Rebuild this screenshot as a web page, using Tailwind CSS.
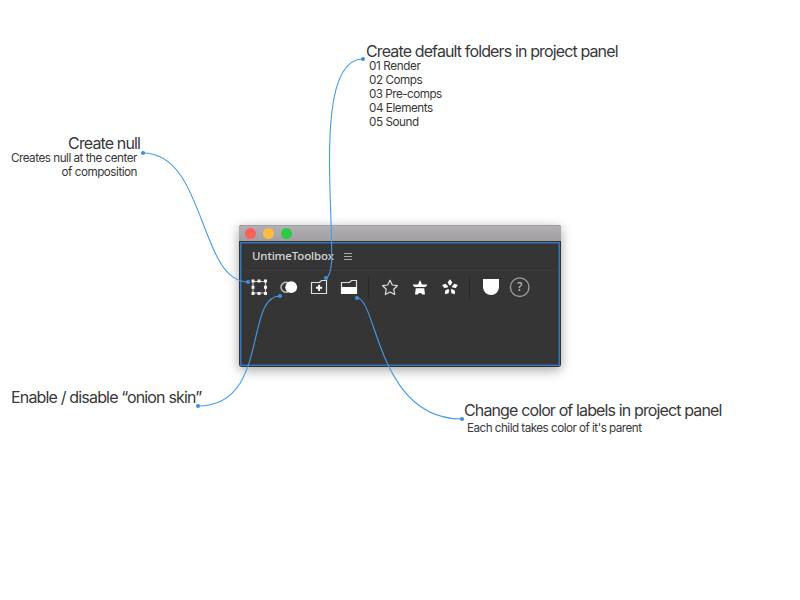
<!DOCTYPE html>
<html lang="en">
<head>
<meta charset="utf-8">
<title>UntimeToolbox</title>
<script src="https://cdn.jsdelivr.net/npm/@tailwindcss/browser@4"></script>
</head>
<body class="bg-white">
<main class="relative h-[600px] w-[800px] overflow-hidden bg-white font-[Inter,sans-serif] text-[#383838]">

  <!-- Panel window -->
  <section class="absolute left-[239px] top-[225px] flex h-[142px] w-[322px] flex-col overflow-hidden rounded-[3px] bg-[#303236] shadow-[0_3px_12px_rgba(0,0,0,0.36)]">
    <header class="flex h-4 shrink-0 items-center gap-[7px] border-t border-[#a09ea0] bg-linear-to-b from-[#b3b0b3] to-[#a29fa2] pl-[6px]">
      <i class="size-[11px] rounded-full bg-[#fc605b]"></i>
      <i class="size-[11px] rounded-full bg-[#fdbc40]"></i>
      <i class="size-[11px] rounded-full bg-[#2bcb43]"></i>
    </header>
    <div class="mx-px mb-px mt-[1px] flex grow flex-col border border-[#3777b5] bg-[#353535] shadow-[inset_0_0_0_1px_#36536f]">
      <div class="flex h-7 items-center gap-[10px] border-b border-[#3d3d3d] pl-[11px]">
        <span class="w-[82px] whitespace-nowrap pb-[2px] font-['Noto_Sans',sans-serif] text-[11.500px] font-medium tracking-[-0.150px] text-[#d5d5d5]">UntimeToolbox</span>
        <svg class="h-[9px] w-[9px]" viewBox="0 0 9 9" stroke="#aaa"><path d="M0 1.5h8M0 4.5h8M0 7.5h8"/></svg>
      </div>
      <div class="h-[34px]">
        <svg class="h-[34px] w-[319px]" viewBox="241 271 319 34" fill="none" stroke="#dedede" stroke-width="1.2">
          <path d="M253 281.500h12.500v11.500H253z" stroke="#c6c6c6"/>
          <g fill="#f4f4f4" stroke="none"><path d="M251.500 279.500h3v3h-3zM257.500 279.500h3v3h-3zM264 279.500h3v3h-3zM251.500 285.700h3v3h-3zM264 285.700h3v3h-3zM251.500 292h3v3h-3zM257.500 292h3v3h-3zM264 292h3v3h-3z"/></g>
          <circle cx="286" cy="287.200" r="5" stroke="#c8c8c8" stroke-width="1.400"/>
          <circle cx="291.200" cy="287.200" r="5.900" fill="#fff" stroke="none"/>
          <path d="M311.500 282.500h8l2-2h5v13h-15zM341.500 282.500h8l2-2h5v13h-15z"/>
          <path d="M316 287.800h6.200M319.100 284.700v6.200" stroke="#fff" stroke-width="1.900"/>
          <path d="M341 287h16v7h-16z" fill="#fff" stroke="none"/>
          <path d="M368.500 277v22M469.500 277v22" stroke="#292929" stroke-width="1"/>
          <path d="M390 280.300l2.300 4.700 5.100.7-3.700 3.600 1 5.200-4.700-2.500-4.700 2.500 1-5.200-3.700-3.600 5.100-.7z" stroke-linejoin="round"/>
          <g fill="#fff" stroke="none">
            <path d="M420 280l2 4.600h5v.8l-1.700 1.600h-10.600l-1.700-1.600v-.8h5zM415.800 288.300h8.400l.8 6.200h-2.600q-2.300-2.800-4.800 0h-2.600z"/>
            <path d="M450 279.300l2.300 2.900-1.500 3.100h-1.600l-1.500-3.100z"/>
            <path d="M450 279.300l2.200 2.900-1.500 3.100h-1.400l-1.500-3.100z" transform="rotate(72 450 287.600)"/>
            <path d="M450 279.300l2.200 2.900-1.500 3.100h-1.400l-1.500-3.100z" transform="rotate(144 450 287.600)"/>
            <path d="M450 279.300l2.200 2.900-1.500 3.100h-1.400l-1.500-3.100z" transform="rotate(216 450 287.600)"/>
            <path d="M450 279.300l2.200 2.900-1.500 3.100h-1.400l-1.500-3.100z" transform="rotate(288 450 287.600)"/>
            <path d="M483 279h16v8a8 8 0 0 1-16 0z"/>
          </g>
          <circle cx="519.700" cy="287.200" r="9.300" stroke="#9c9c9c" stroke-width="1.400"/>
          <text x="519.700" y="291.200" text-anchor="middle" font-family="Noto Sans, sans-serif" font-size="12" font-weight="500" fill="#bdbdbd" stroke="none">?</text>
        </svg>
      </div>
    </div>
  </section>

  <!-- Connectors -->
  <svg class="absolute inset-0 h-[600px] w-[800px]" viewBox="0 0 800 600" fill="none" stroke="#459be6" stroke-width="1.100">
    <path d="M143 153C206 153 199 282 248 282"/>
    <path d="M363 59C314 59 334 210 331.500 263C330.500 273 329 277 326 278"/>
    <path d="M198 406C270 406 244 296 280 296"/>
    <path d="M357 298C377 298 377 419 462 419"/>
    <g fill="#3d92df" stroke="none"><circle cx="143" cy="153" r="2.100"/><circle cx="248" cy="282" r="2.100"/><circle cx="363" cy="59" r="2.100"/><circle cx="326" cy="278" r="2.100"/><circle cx="198" cy="406" r="2.100"/><circle cx="280" cy="296" r="2.100"/><circle cx="357" cy="298" r="2.100"/><circle cx="462" cy="419" r="2.100"/></g>
  </svg>

  <!-- Callouts -->
  <article class="absolute left-[366px] top-[42px] whitespace-nowrap">
    <h2 class="text-[16px] leading-[18px] tracking-[-0.870px]">Create default folders in project panel</h2>
    <ul class="-mt-px pl-[3px] text-[11.700px] leading-[14px] tracking-[-0.450px]">
      <li class="tracking-[-0.380px]">01 Render</li><li>02 Comps</li><li class="tracking-[-0.520px]">03 Pre-comps</li><li>04 Elements</li><li>05 Sound</li>
    </ul>
  </article>
  <article class="absolute right-[660px] top-[134px] whitespace-nowrap text-right">
    <h2 class="text-[16px] leading-[18px] tracking-[-0.870px]">Create null</h2>
    <p class="-mt-px pr-[3px] text-[11.700px] leading-[14px] tracking-[-0.490px]">Creates null at the center<br>of composition</p>
  </article>
  <article class="absolute left-[11px] top-[388px] whitespace-nowrap">
    <h2 class="text-[16px] leading-[18px] tracking-[-0.830px]">Enable / disable “onion skin”</h2>
  </article>
  <article class="absolute left-[464px] top-[401px] whitespace-nowrap">
    <h2 class="text-[16px] leading-[18px] tracking-[-0.870px]">Change color of labels in project panel</h2>
    <p class="mt-[2px] pl-[3px] text-[11.700px] leading-[14px] tracking-[-0.530px]">Each child takes color of it's parent</p>
  </article>
</main>
</body>
</html>
